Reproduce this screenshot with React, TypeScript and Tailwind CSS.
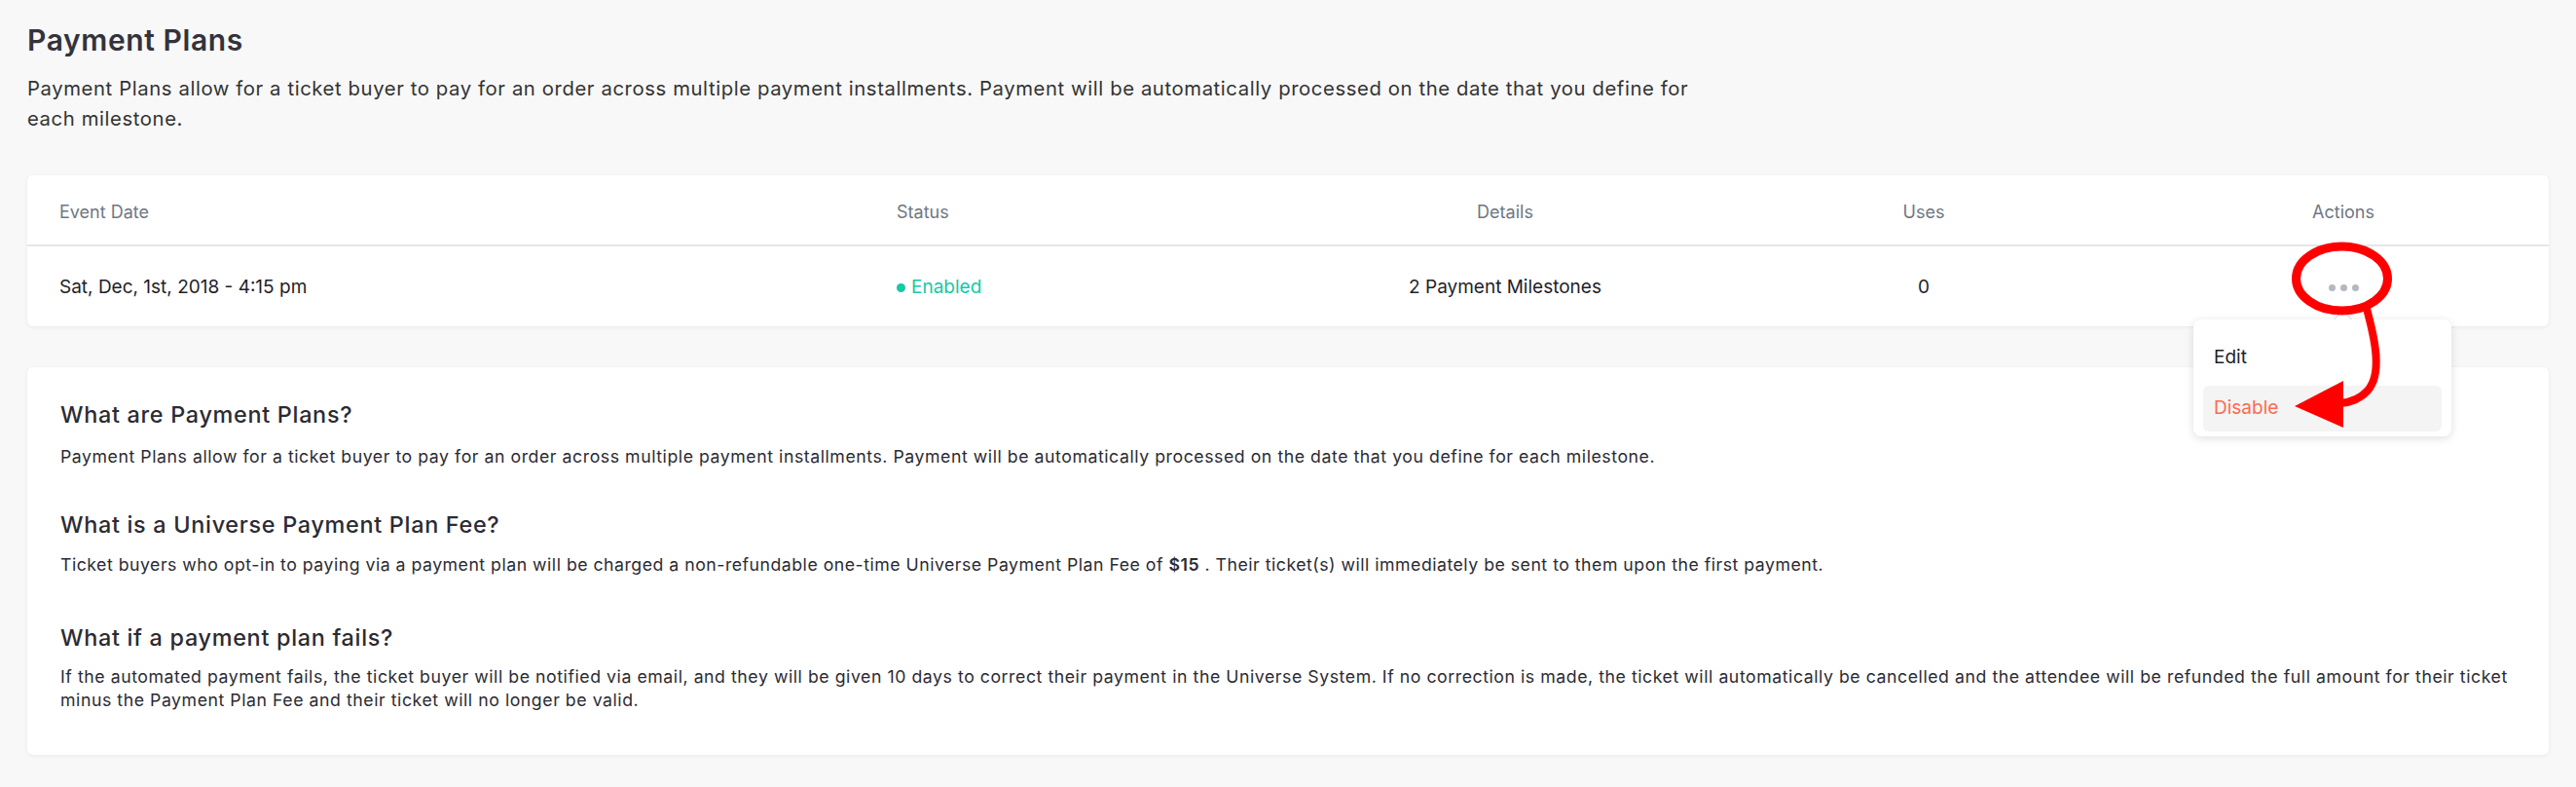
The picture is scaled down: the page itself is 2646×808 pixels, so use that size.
import React from "react";

const font = { fontFamily: 'Inter, "Liberation Sans", Arial, sans-serif' };

function Dots() {
  return (
    <div className="flex items-center justify-center gap-[5px]">
      <span className="block h-[7px] w-[7px] rounded-full bg-[#b3b9c1]" />
      <span className="block h-[7px] w-[7px] rounded-full bg-[#b3b9c1]" />
      <span className="block h-[7px] w-[7px] rounded-full bg-[#b3b9c1]" />
    </div>
  );
}

export default function App() {
  return (
    <div
      className="relative min-h-[808px] w-full bg-[#f8f8f8] px-[28px] pt-[23px] pb-[35px] text-[#333]"
      style={font}
    >
      <h1 className="text-[30px] font-semibold leading-[36px] tracking-[0.6px] text-[#33333b]">Payment Plans</h1>
      <p className="mt-[16px] text-[20.3px] leading-[31px] tracking-[0.6px] text-[#333]">
        Payment Plans allow for a ticket buyer to pay for an order across multiple payment installments. Payment will
        be automatically processed on the date that you define for
        <br />
        each milestone.
      </p>

      {/* Table card */}
      <div className="mt-[43px] rounded-[6px] bg-white shadow-[0_1px_4px_rgba(0,0,0,0.07)]">
        <div className="grid grid-cols-[860px_442px_366px_494px_368px] px-[33px] pt-[26px] pb-[21px] text-[18px] leading-[24px] text-[#6f7782]">
          <div>Event Date</div>
          <div>Status</div>
          <div className="text-center">Details</div>
          <div className="text-center">Uses</div>
          <div className="text-center">Actions</div>
        </div>
        <div className="h-[2px] bg-[#e3e6ea]" />
        <div className="grid grid-cols-[860px_442px_366px_494px_368px] items-center px-[33px] pt-[30px] pb-[28px] text-[19px] leading-[24px] text-[#1e1e2a]">
          <div>Sat, Dec, 1st, 2018 - 4:15 pm</div>
          <div className="flex items-center gap-[6px] text-[#14c9a6]">
            <span className="block h-[9px] w-[9px] rounded-full bg-[#14c9a6]" />
            <span>Enabled</span>
          </div>
          <div className="text-center">2 Payment Milestones</div>
          <div className="text-center">0</div>
          <div className="flex justify-center">
            <Dots />
          </div>
        </div>
      </div>

      {/* Info card */}
      <div className="mt-[42px] rounded-[6px] bg-white px-[34px] pt-[35px] pb-[44px] shadow-[0_1px_4px_rgba(0,0,0,0.07)]">
        <h2 className="text-[23.4px] font-medium leading-[28px] tracking-[0.7px] text-[#2b2b33]">
          What are Payment Plans?
        </h2>
        <p className="mt-[17px] text-[17.7px] leading-[24px] tracking-[0.55px] text-[#2b2b33]">
          Payment Plans allow for a ticket buyer to pay for an order across multiple payment installments. Payment will
          be automatically processed on the date that you define for each milestone.
        </p>
        <h2 className="mt-[44px] text-[23.4px] font-medium leading-[28px] tracking-[0.7px] text-[#2b2b33]">
          What is a Universe Payment Plan Fee?
        </h2>
        <p className="mt-[15px] text-[17.7px] leading-[24px] tracking-[0.5px] text-[#2b2b33]">
          Ticket buyers who opt-in to paying via a payment plan will be charged a non-refundable one-time Universe
          Payment Plan Fee of <span className="font-semibold">$15</span> . Their ticket(s) will immediately be sent to
          them upon the first payment.
        </p>
        <h2 className="mt-[49px] text-[23.4px] font-medium leading-[28px] tracking-[0.7px] text-[#2b2b33]">
          What if a payment plan fails?
        </h2>
        <p className="mt-[14px] text-[17.7px] leading-[24px] tracking-[0.55px] text-[#2b2b33]">
          If the automated payment fails, the ticket buyer will be notified via email, and they will be given 10 days to
          correct their payment in the Universe System. If no correction is made, the ticket will automatically be
          cancelled and the attendee will be refunded the full amount for their ticket
          <br />
          minus the Payment Plan Fee and their ticket will no longer be valid.
        </p>
      </div>

      {/* Dropdown menu */}
      <div className="absolute left-[2253px] top-[328px] w-[265px] rounded-[8px] bg-white px-[10px] pt-[16px] pb-[5px] shadow-[0_2px_10px_rgba(0,0,0,0.13)]">
        <div className="absolute left-[147px] top-[-7px] h-[13px] w-[13px] rotate-45 border-l border-t border-[#d6d9dd] bg-white" />
        <div className="flex flex-col gap-[5px] text-[19px] leading-[24px]">
          <div className="rounded-[6px] px-[11px] pt-[11px] pb-[12px] text-[#1e1e2a]">Edit</div>
          <div className="rounded-[6px] bg-[#f4f4f4] px-[11px] pt-[11px] pb-[12px] text-[#ff6a4f]">Disable</div>
        </div>
      </div>

      {/* Red annotation */}
      <svg
        className="pointer-events-none absolute left-0 top-0"
        width="2646"
        height="808"
        viewBox="0 0 2646 808"
      >
        <ellipse cx="2405.5" cy="286" rx="47" ry="33" fill="none" stroke="#ff0000" strokeWidth="9" />
        <path
          d="M2431 317 C2440 350 2447 384 2432 401 C2424 410 2415 413 2404 414"
          fill="none"
          stroke="#ff0000"
          strokeWidth="8"
          strokeLinecap="butt"
        />
        <polygon points="2357,417 2407,391 2407,439" fill="#ff0000" />
      </svg>
    </div>
  );
}
